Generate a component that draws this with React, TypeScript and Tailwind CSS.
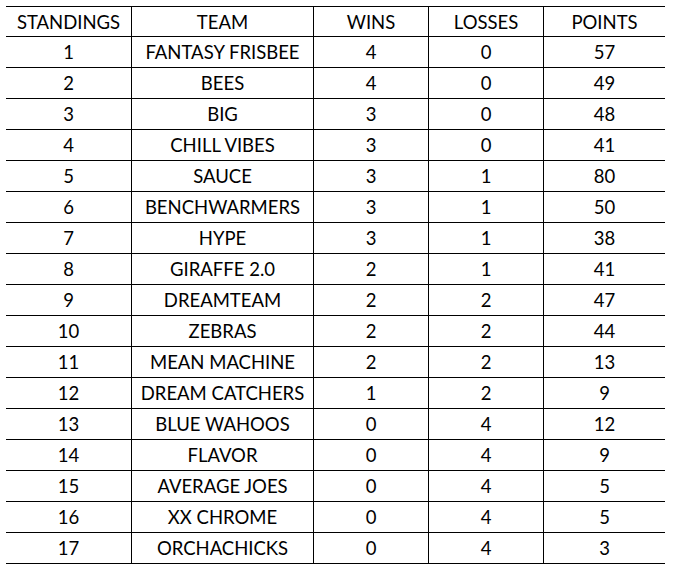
const rows: [number, string, number, number, number][] = [
  [1, 'FANTASY FRISBEE', 4, 0, 57],
  [2, 'BEES', 4, 0, 49],
  [3, 'BIG', 3, 0, 48],
  [4, 'CHILL VIBES', 3, 0, 41],
  [5, 'SAUCE', 3, 1, 80],
  [6, 'BENCHWARMERS', 3, 1, 50],
  [7, 'HYPE', 3, 1, 38],
  [8, 'GIRAFFE 2.0', 2, 1, 41],
  [9, 'DREAMTEAM', 2, 2, 47],
  [10, 'ZEBRAS', 2, 2, 44],
  [11, 'MEAN MACHINE', 2, 2, 13],
  [12, 'DREAM CATCHERS', 1, 2, 9],
  [13, 'BLUE WAHOOS', 0, 4, 12],
  [14, 'FLAVOR', 0, 4, 9],
  [15, 'AVERAGE JOES', 0, 4, 5],
  [16, 'XX CHROME', 0, 4, 5],
  [17, 'ORCHACHICKS', 0, 4, 3],
];

const headers = ['STANDINGS', 'TEAM', 'WINS', 'LOSSES', 'POINTS'];

const cols = 'grid grid-cols-[125px_182px_115px_115px_122px]';

const Cell = ({ children, first }: { children: React.ReactNode; first?: boolean }) => (
  <div className={`flex items-center justify-center pt-[2px] ${first ? '' : 'border-l border-black'}`}>
    {children}
  </div>
);

export default function App() {
  return (
    <div className="w-[675px] h-[575px] bg-white pt-[6px] pl-[6px] text-[18.5px] text-black font-['Lato',sans-serif]">
      <div className="w-[659px] border-t-[1.5px] border-black">
        <div className={`${cols} h-[30px] border-b-[1.5px] border-black`}>
          {headers.map((h, i) => (
            <Cell key={h} first={i === 0}>{h}</Cell>
          ))}
        </div>
        {rows.map((r) => (
          <div key={r[0]} className={`${cols} h-[31px] border-b-[1.5px] border-black`}>
            {r.map((v, i) => (
              <Cell key={i} first={i === 0}>{v}</Cell>
            ))}
          </div>
        ))}
      </div>
    </div>
  );
}
